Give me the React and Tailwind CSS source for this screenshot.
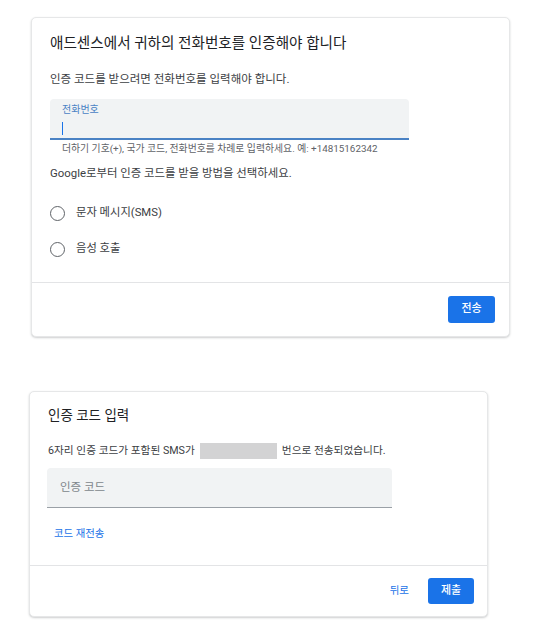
import React from 'react';

const font = { fontFamily: 'Roboto, "Noto Sans CJK KR", "Noto Sans", sans-serif' };

function Radio({ label }) {
  return (
    <div className="flex items-center h-[20px]">
      <span className="w-[15px] h-[15px] rounded-full border-[1.5px] border-[#5f6368] ml-[-1px]" />
      <span className="ml-[11px] text-[11.3px] text-[#3c4043]">{label}</span>
    </div>
  );
}

export default function App() {
  return (
    <div className="w-[549px] h-[633px] bg-white relative overflow-hidden" style={font}>
      {/* Phone number card */}
      <div className="ml-[31px] mt-[17px] w-[479px] h-[320px] bg-white rounded-[5px] border border-[#e6e7e8] shadow-[0_1px_2px_rgba(60,64,67,0.25)] flex flex-col">
        <div className="px-[18px] pt-[13px] flex-1">
          <h2 className="text-[14.6px] leading-[24px] text-[#202124]">애드센스에서 귀하의 전화번호를 인증해야 합니다</h2>
          <p className="mt-[15px] text-[11.5px] leading-[18px] text-[#3c4043]">인증 코드를 받으려면 전화번호를 입력해야 합니다.</p>
          <div className="mt-[11px] w-[359px] h-[41px] bg-[#f1f3f4] rounded-t-[4px] border-b-2 border-[#4a82c4] pl-[12px] pt-[4px]">
            <div className="text-[10px] leading-[14px] text-[#4a82c4]">전화번호</div>
            <div className="mt-[5px] w-px h-[13px] bg-[#1a73e8]" />
          </div>
          <p className="pl-[12px] mt-[2px] text-[9.85px] leading-[14px] text-[#5f6368]">더하기 기호(+), 국가 코드, 전화번호를 차례로 입력하세요. 예: +14815162342</p>
          <p className="mt-[8px] text-[11.4px] leading-[18px] text-[#3c4043]">Google로부터 인증 코드를 받을 방법을 선택하세요.</p>
          <div className="mt-[21px] flex flex-col gap-[16px] pl-[1px]">
            <Radio label="문자 메시지(SMS)" />
            <Radio label="음성 호출" />
          </div>
        </div>
        <div className="border-t border-[#e3e4e6] h-[54px] flex items-center justify-end pr-[14px]">
          <button className="w-[47px] h-[27px] rounded-[3px] bg-[#1a73e8] text-white text-[11px] font-medium">전송</button>
        </div>
      </div>

      {/* Verification code card */}
      <div className="ml-[29px] mt-[54px] w-[459px] h-[226px] bg-white rounded-[5px] border border-[#e6e7e8] shadow-[0_1px_2px_rgba(60,64,67,0.25)] flex flex-col">
        <div className="px-[18px] pt-[12px] flex-1">
          <h2 className="text-[13.5px] leading-[22px] text-[#202124]">인증 코드 입력</h2>
          <p className="mt-[17px] flex items-center text-[10.7px] leading-[16px] text-[#3c4043]">
            6자리 인증 코드가 포함된 SMS가
            <span className="inline-block w-[77px] h-[16px] bg-[#d3d3d4] mx-[5px]" />
            번으로 전송되었습니다.
          </p>
          <div className="mt-[9px] ml-[-1px] w-[345px] h-[40px] bg-[#f1f3f4] rounded-t-[4px] border-b border-[#9aa0a6] pl-[13px] flex items-center">
            <span className="text-[11.5px] text-[#80868b]">인증 코드</span>
          </div>
          <div className="mt-[18px] pl-[6px] text-[10.4px] leading-[16px] text-[#1a73e8]">코드 재전송</div>
        </div>
        <div className="border-t border-[#e3e4e6] h-[51px] flex items-center justify-end pr-[13px]">
          <span className="text-[10.5px] text-[#1a73e8] mr-[19px]">뒤로</span>
          <button className="w-[46px] h-[26px] rounded-[3px] bg-[#1a73e8] text-white text-[11px] font-medium">제출</button>
        </div>
      </div>
    </div>
  );
}
